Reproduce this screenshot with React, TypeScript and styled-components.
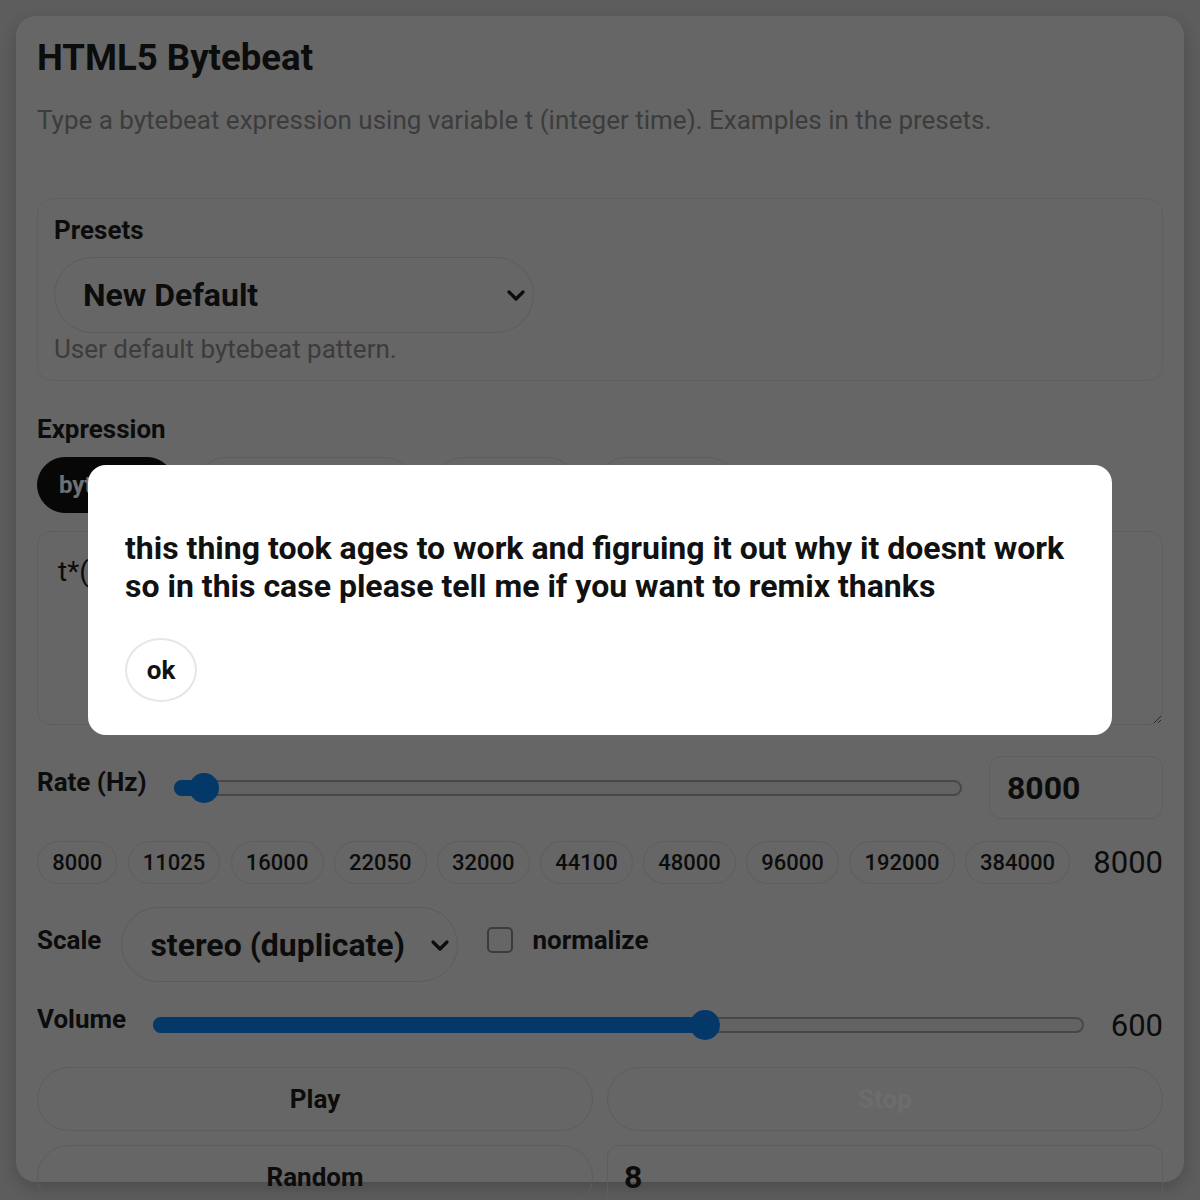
import React from "react";
import styled, { createGlobalStyle } from "styled-components";

const GlobalStyle = createGlobalStyle`
  html, body { margin: 0; padding: 0; }
  body {
    background: #d4d4d4;
    font-family: Roboto, "Liberation Sans", Arial, sans-serif;
    color: #1c1c1c;
    overflow: hidden;
  }
  * { box-sizing: border-box; }
`;

const Page = styled.div`
  padding: 16px;
  height: 1200px;
`;

const Card = styled.main`
  height: 1166px;
  background: #e8e8e8;
  border-radius: 20px;
  box-shadow: 0 6px 18px rgba(0, 0, 0, 0.2);
  padding: 20px 21px;
  display: flex;
  flex-direction: column;
  & > * {
    flex-shrink: 0;
  }
`;

const Title = styled.h1`
  margin: 0;
  font-size: 36.6px;
  line-height: 44px;
  font-weight: 700;
  color: #1c1c1c;
`;

const Subtitle = styled.p`
  margin: 24px 0 0;
  font-size: 26px;
  line-height: 32px;
  color: #888;
`;

const PresetBox = styled.section`
  margin-top: 62px;
  border: 1px solid #dadada;
  border-radius: 16px;
  padding: 17px 16px;
  display: flex;
  flex-direction: column;
  align-items: flex-start;
`;

const Label = styled.div<{ $shift?: number }>`
  font-size: 26px;
  line-height: 28px;
  font-weight: 700;
  color: #1c1c1c;
  white-space: nowrap;
  margin-bottom: ${(p) => p.$shift ?? 0}px;
`;

const SelectBox = styled.div<{ $w: number; $h: number }>`
  width: ${(p) => p.$w}px;
  height: ${(p) => p.$h}px;
  border: 1.5px solid #d0d0d0;
  border-radius: 999px;
  padding: 0 6px 0 28px;
  display: flex;
  align-items: center;
  justify-content: space-between;
  font-size: 32px;
  font-weight: 700;
  color: #1c1c1c;
  flex-shrink: 0;
`;

const PresetSelect = styled(SelectBox)`
  margin-top: 13px;
`;

const Help = styled.div`
  margin-top: 2px;
  font-size: 26px;
  line-height: 28px;
  color: #888;
`;

const SectionLabel = styled(Label)`
  margin-top: 33px;
  line-height: 30px;
`;

const Tabs = styled.div`
  margin-top: 13px;
  display: flex;
  gap: 22px;
`;

const Tab = styled.button<{ $active?: boolean }>`
  height: 56px;
  padding: 0 21px;
  border-radius: 999px;
  border: 1px solid ${(p) => (p.$active ? "#111" : "#d3d3d3")};
  background: ${(p) => (p.$active ? "#111" : "transparent")};
  color: ${(p) => (p.$active ? "#fff" : "#1c1c1c")};
  font-family: inherit;
  font-size: 24px;
  font-weight: 700;
`;

const Expr = styled.textarea`
  margin-top: 18px;
  height: 194px;
  width: 100%;
  border: 1px solid #d3d3d3;
  border-radius: 14px;
  background: transparent;
  padding: 22px 20px;
  font-family: Roboto, "Liberation Sans", Arial, sans-serif;
  font-size: 28px;
  line-height: 36px;
  color: #1c1c1c;
  resize: vertical;
  outline: none;
`;

const Row = styled.div<{ $mt: number; $h: number; $gap: number }>`
  margin-top: ${(p) => p.$mt}px;
  height: ${(p) => p.$h}px;
  display: flex;
  align-items: center;
  gap: ${(p) => p.$gap}px;
`;

const Track = styled.div`
  position: relative;
  flex: 1;
  height: 16px;
  border-radius: 8px;
  background: #e1e1e1;
  border: 2px solid #a3a3a3;
`;

const Fill = styled.div`
  position: absolute;
  left: -2px;
  top: -2px;
  bottom: -2px;
  border-radius: 8px;
  background: #0a80f0;
`;

const Thumb = styled.div`
  position: absolute;
  top: 50%;
  width: 30px;
  height: 30px;
  margin: -15px 0 0 -15px;
  border-radius: 50%;
  background: #0a80f0;
`;

const NumBox = styled.div`
  width: 174px;
  height: 63px;
  border: 1px solid #d3d3d3;
  border-radius: 12px;
  padding-left: 17px;
  display: flex;
  align-items: center;
  font-size: 32px;
  font-weight: 700;
  flex-shrink: 0;
`;

const Chips = styled.div`
  margin-top: 22px;
  display: flex;
  align-items: center;
  gap: 10.2px;
`;

const Chip = styled.button`
  height: 43px;
  padding: 0 14.2px;
  border: 1px solid #d3d3d3;
  border-radius: 999px;
  background: transparent;
  font-family: inherit;
  font-size: 22px;
  font-weight: 500;
  color: #1c1c1c;
`;

const Value = styled.div`
  margin-left: auto;
  font-size: 31px;
  color: #1c1c1c;
`;

const VolValue = styled.div`
  font-size: 31px;
  color: #1c1c1c;
  flex-shrink: 0;
`;

const CheckGroup = styled.label`
  display: flex;
  align-items: center;
  gap: 19px;
  margin-left: 9px;
  margin-bottom: 10px;
`;

const CheckBox = styled.span`
  width: 26px;
  height: 26px;
  border: 2px solid #888;
  border-radius: 5px;
`;

const Buttons = styled.div`
  margin-top: 22px;
  display: grid;
  grid-template-columns: 1fr 1fr;
  gap: 14px;
`;

const Btn = styled.button<{ $disabled?: boolean }>`
  height: 64px;
  border: 1px solid #d3d3d3;
  border-radius: 999px;
  background: transparent;
  font-family: inherit;
  font-size: 26px;
  font-weight: 700;
  color: ${(p) => (p.$disabled ? "#f6f6f6" : "#1c1c1c")};
`;

const SeedBox = styled.div`
  height: 64px;
  border: 1px solid #d3d3d3;
  border-radius: 12px;
  padding-left: 16px;
  display: flex;
  align-items: center;
  font-size: 32px;
  font-weight: 700;
`;

const Backdrop = styled.div`
  position: fixed;
  inset: 0;
  background: rgba(0, 0, 0, 0.56);
  display: flex;
  align-items: center;
  justify-content: center;
`;

const Modal = styled.div`
  width: 1024px;
  background: #fff;
  border-radius: 18px;
  padding: 36px 37px 33px;
`;

const ModalText = styled.p`
  margin: 28px 0 33px;
  font-size: 32px;
  line-height: 38px;
  font-weight: 700;
  color: #111;
`;

const OkButton = styled.button`
  width: 72px;
  height: 64px;
  border: 2px solid #e6e6e6;
  border-radius: 50%;
  background: #fff;
  font-family: inherit;
  font-size: 26px;
  font-weight: 700;
  color: #111;
`;

const Chevron = () => (
  <svg width="22" height="22" viewBox="0 0 22 22">
    <polyline points="4,8 11,15 18,8" fill="none" stroke="#1c1c1c" strokeWidth="3.2" strokeLinecap="round" strokeLinejoin="round" />
  </svg>
);

const Slider = ({ f }: { f: number }) => (
  <Track>
    <Fill style={{ width: `calc(30px + ${f} * (100% - 56px))` }} />
    <Thumb style={{ left: `calc(28px + ${f} * (100% - 56px))` }} />
  </Track>
);

const rates = ["8000", "11025", "16000", "22050", "32000", "44100", "48000", "96000", "192000", "384000"];

export default function App() {
  return (
    <>
      <GlobalStyle />
      <Page>
        <Card>
          <Title>HTML5 Bytebeat</Title>
          <Subtitle>Type a bytebeat expression using variable t (integer time). Examples in the presets.</Subtitle>
          <PresetBox>
            <Label>Presets</Label>
            <PresetSelect $w={480} $h={76}>
              <span>New Default</span>
              <Chevron />
            </PresetSelect>
            <Help>User default bytebeat pattern.</Help>
          </PresetBox>
          <SectionLabel>Expression</SectionLabel>
          <Tabs>
            <Tab $active>bytebeat</Tab>
            <Tab>signed bytebeat</Tab>
            <Tab>floatbeat</Tab>
            <Tab>funcbeat</Tab>
          </Tabs>
          <Expr defaultValue="t*(42&t>>10)" spellCheck={false} />
          <Row $mt={31} $h={63} $gap={27}>
            <Label $shift={12}>Rate (Hz)</Label>
            <Slider f={0} />
            <NumBox>8000</NumBox>
          </Row>
          <Chips>
            {rates.map((r) => (
              <Chip key={r}>{r}</Chip>
            ))}
            <Value>8000</Value>
          </Chips>
          <Row $mt={23} $h={75} $gap={20}>
            <Label $shift={10}>Scale</Label>
            <SelectBox $w={337} $h={75}>
              <span>stereo (duplicate)</span>
              <Chevron />
            </SelectBox>
            <CheckGroup>
              <CheckBox />
              <Label>normalize</Label>
            </CheckGroup>
          </Row>
          <Row $mt={23} $h={40} $gap={27}>
            <Label $shift={12}>Volume</Label>
            <Slider f={0.6} />
            <VolValue>600</VolValue>
          </Row>
          <Buttons>
            <Btn>Play</Btn>
            <Btn $disabled>Stop</Btn>
            <Btn>Random</Btn>
            <SeedBox>8</SeedBox>
          </Buttons>
        </Card>
      </Page>
      <Backdrop>
        <Modal>
          <ModalText>
            this thing took ages to work and figruing it out why it doesnt work so in this case please tell me if you want to remix thanks
          </ModalText>
          <OkButton>ok</OkButton>
        </Modal>
      </Backdrop>
    </>
  );
}
